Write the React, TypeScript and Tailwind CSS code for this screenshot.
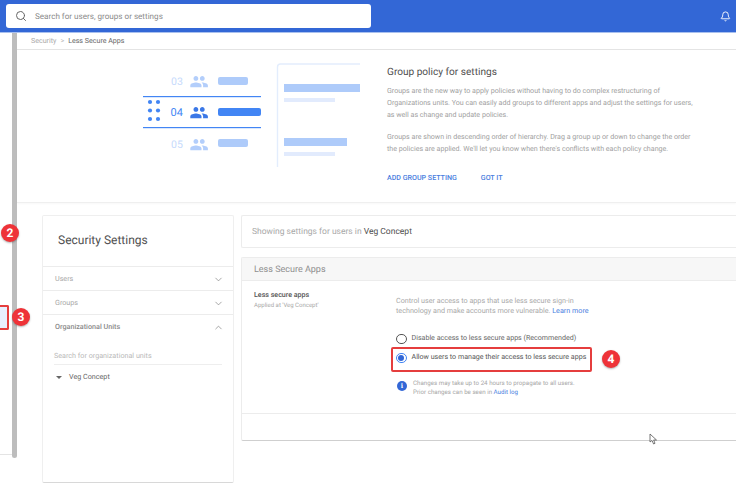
import React from "react";
import { Bell, ChevronDown, ChevronUp, Search } from "lucide-react";

const PEOPLE =
  "M16 11c1.66 0 2.99-1.34 2.99-3S17.66 5 16 5c-1.66 0-3 1.34-3 3s1.34 3 3 3zm-8 0c1.66 0 2.99-1.34 2.99-3S9.66 5 8 5C6.34 5 5 6.34 5 8s1.34 3 3 3zm0 2c-2.33 0-7 1.17-7 3.5V19h14v-2.5c0-2.33-4.67-3.5-7-3.5zm8 0c-.29 0-.62.02-.97.05 1.16.84 1.97 1.97 1.97 3.45V19h6v-2.5c0-2.33-4.67-3.5-7-3.5z";

function Illustration() {
  return (
    <svg width="217" height="105" viewBox="0 0 217 105" className="shrink-0">
      {/* rows, origin is 143,63 on the page */}
      <text x="28" y="22" fontSize="10.5" fill="#c6dafc" fontFamily="Roboto, sans-serif">03</text>
      <path d={PEOPLE} fill="#b3cefb" transform="translate(46.5,9) scale(0.8)" />
      <rect x="75" y="14" width="30" height="8" rx="2" fill="#aecbfa" />

      <rect x="0" y="33" width="118" height="1.2" fill="#4285f4" />
      <rect x="0" y="64" width="118" height="1.2" fill="#4285f4" />
      {[7, 15].map((x) =>
        [39, 47.5, 56].map((y) => <circle key={`${x}-${y}`} cx={x} cy={y} r="2.1" fill="#4285f4" />)
      )}
      <text x="27.5" y="53" fontSize="11" fill="#4285f4" fontFamily="Roboto, sans-serif">04</text>
      <path d={PEOPLE} fill="#3b78e7" transform="translate(46.5,40) scale(0.8)" />
      <rect x="75" y="45" width="43" height="8" rx="2" fill="#4285f4" />

      <text x="28" y="85" fontSize="10.5" fill="#c6dafc" fontFamily="Roboto, sans-serif">05</text>
      <path d={PEOPLE} fill="#b3cefb" transform="translate(46.5,72) scale(0.8)" />
      <rect x="75" y="76" width="30" height="8" rx="2" fill="#aecbfa" />

      {/* policy card */}
      <path d="M134.5 104V4a3 3 0 0 1 3-3H217" fill="none" stroke="#e3edfd" strokeWidth="1.4" />
      <rect x="141" y="21" width="76" height="8" fill="#aecbfa" />
      <rect x="141" y="35" width="51" height="4" fill="#e2ebfd" />
      <rect x="141" y="75" width="63" height="8" fill="#aecbfa" />
      <rect x="141" y="89" width="51" height="4" fill="#e2ebfd" />
    </svg>
  );
}

function Badge({ n, className }: { n: number; className: string }) {
  return (
    <div
      className={`absolute flex h-[18px] w-[18px] items-center justify-center rounded-full bg-[#ee3338] text-[12px] font-bold text-white shadow-[0_1px_2px_rgba(0,0,0,0.3)] ${className}`}
    >
      {n}
    </div>
  );
}

function SideRow({ label, open }: { label: string; open?: boolean }) {
  return (
    <div className={`flex h-[24px] items-center justify-between pl-[12px] pr-[9px] ${open ? "" : "border-b border-[#ececec] pt-[1px]"}`}>
      <span className={`text-[7.2px] ${open ? "font-medium text-[#8a8a8a]" : "text-[#a8a8a8]"}`}>{label}</span>
      {open ? (
        <ChevronUp size={11} strokeWidth={1.4} className="text-[#777]" />
      ) : (
        <ChevronDown size={11} strokeWidth={1.4} className="text-[#777]" />
      )}
    </div>
  );
}

function Radio({ on }: { on?: boolean }) {
  return (
    <span
      className={`mt-[0.5px] flex h-[10.5px] w-[10.5px] shrink-0 items-center justify-center rounded-full border ${on ? "border-[#4285f4]" : "border-[#555]"}`}
    >
      {on && <span className="h-[6px] w-[6px] rounded-full bg-[#3367d6]" />}
    </span>
  );
}

export default function App() {
  return (
    <div className="relative h-[491px] w-[736px] overflow-hidden bg-white font-['Roboto',sans-serif] [text-rendering:geometricPrecision]">
      {/* top bar */}
      <header className="flex h-[33px] items-start justify-between border-b border-[#a9c0ee] bg-[#3367d6] pl-[6px] pr-[5px] pt-[4px]">
        <div className="flex h-[24px] w-[365px] items-center rounded-[3px] bg-white pl-[9px]">
          <Search size={12} strokeWidth={2} className="text-[#666]" />
          <span className="ml-[8px] text-[8.1px] text-[#8a8a8a]">Search for users, groups or settings</span>
        </div>
        <Bell size={11} strokeWidth={2} className="mt-[7px] text-white" />
      </header>

      <div className="flex h-[458px]">
        {/* collapsed side nav, mostly hidden */}
        <div className="flex h-[422px] w-[12px] shrink-0 flex-col border-b border-[#e4e4e4]" />
        {/* scrollbar */}
        <div className="h-[425px] w-[5px] shrink-0 rounded-b-[3px] bg-[#bdbdbd]" />

        <main className="min-w-0 flex-1">
          <div className="flex h-[17px] items-center border-b border-[#e4e4e4] pl-[14px] text-[7.1px]">
            <span className="text-[#a8a8a8]">Security</span>
            <span className="mx-[4px] text-[#a8a8a8]">&gt;</span>
            <span className="text-[#666]">Less Secure Apps</span>
          </div>

          {/* group policy promo */}
          <section className="flex h-[153px] border-b border-[#efefef] pl-[126px] pt-[13px] shadow-[0_1px_2px_rgba(0,0,0,0.03)]">
            <Illustration />
            <div className="ml-[27px] w-[330px] shrink-0 pt-[2px]">
              <h2 className="text-[10.1px] leading-[15px] text-[#505050]">Group policy for settings</h2>
              <p className="mt-[5px] text-[7.1px] leading-[12.2px] text-[#a0a0a0]">
                Groups are the new way to apply policies without having to do complex restructuring of
                <br />
                Organizations units. You can easily add groups to different apps and adjust the settings for users,
                <br />
                as well as change and update policies.
              </p>
              <p className="mt-[9px] text-[7.1px] leading-[12.2px] text-[#a0a0a0]">
                Groups are shown in descending order of hierarchy. Drag a group up or down to change the order
                <br />
                the policies are applied. We'll let you know when there's conflicts with each policy change.
              </p>
              <div className="mt-[18px] flex gap-[24px] text-[7.1px] font-medium leading-[10px] text-[#4a7ee0]">
                <span>ADD GROUP SETTING</span>
                <span>GOT IT</span>
              </div>
            </div>
          </section>

          <div className="flex pl-[25px] pt-[12px]">
            {/* settings nav */}
            <aside className="h-[268px] w-[192px] shrink-0 rounded-[2px] border border-[#efefef] border-b-[#d8d8d8]">
              <h1 className="flex h-[51px] items-center border-b border-[#ececec] pb-[3px] pl-[15px] text-[12px] text-[#505050]">
                Security Settings
              </h1>
              <SideRow label="Users" />
              <SideRow label="Groups" />
              <SideRow label="Organizational Units" open />
              <div className="mx-[11px] mt-[12px] border-b border-[#eeeeee] pb-[3px] text-[7.2px] leading-[10px] text-[#b8b8b8]">
                Search for organizational units
              </div>
              <div className="ml-[13px] mt-[7px] flex items-center text-[7.2px] leading-[10px] text-[#666]">
                <span className="h-0 w-0 border-x-[3px] border-t-[3px] border-x-transparent border-t-[#666]" />
                <span className="ml-[7px]">Veg Concept</span>
              </div>
            </aside>

            <div className="ml-[7px] min-w-0 flex-1">
              <div className="flex h-[33px] items-center rounded-l-[2px] border border-r-0 border-[#ececec] pl-[10px] pt-[1px] text-[8.5px]">
                <span className="text-[#a8a8a8]">Showing settings for users in&nbsp;</span>
                <span className="text-[#505050]">Veg Concept</span>
              </div>

              {/* less secure apps card */}
              <section className="mt-[9px] h-[184px] rounded-l-[2px] border border-r-0 border-[#ececec] border-b-[#cfcfcf]">
                <div className="flex h-[23px] items-center border-b border-[#ececec] bg-[#f7f7f7] pl-[12px] pt-[3px] text-[9px] text-[#8f8f8f]">
                  Less Secure Apps
                </div>
                <div className="flex h-[133px] border-b border-[#ececec]">
                  <div className="w-[142px] shrink-0 pl-[12px] pt-[8px]">
                    <div className="text-[7.1px] font-medium leading-[11px] text-[#555]">Less secure apps</div>
                    <div className="mt-[1px] text-[6px] leading-[9px] text-[#a8a8a8]">Applied at 'Veg Concept'</div>
                  </div>
                  <div className="min-w-0 flex-1 pl-[12px] pt-[15px]">
                    <p className="text-[7.2px] leading-[10px] text-[#a8a8a8]">
                      Control user access to apps that use less secure sign-in
                      <br />
                      technology and make accounts more vulnerable. <span className="text-[#4a7ee0]">Learn more</span>
                    </p>
                    <div className="mt-[17px] flex items-start gap-[5px] text-[7.1px] leading-[10px] text-[#666]">
                      <Radio />
                      <span>Disable access to less secure apps (Recommended)</span>
                    </div>
                    {/* annotated option */}
                    <div className="-ml-[5px] mt-[3px] flex h-[25px] w-[201px] items-start gap-[5px] rounded-[2px] border-2 border-[#e53e3e] pl-[3px] pt-[3px] text-[7.1px] leading-[10px] text-[#555]">
                      <Radio on />
                      <span className="whitespace-nowrap">Allow users to manage their access to less secure apps</span>
                    </div>
                    <div className="mt-[7px] flex items-start text-[6.2px] leading-[8.5px] text-[#a8a8a8]">
                      <span className="ml-px mt-[2px] flex h-[10px] w-[10px] shrink-0 items-center justify-center rounded-full bg-[#3367d6] font-serif text-[7.5px] font-bold text-white">
                        i
                      </span>
                      <p className="ml-[6px]">
                        Changes may take up to 24 hours to propagate to all users.
                        <br />
                        Prior changes can be seen in <span className="text-[#4a7ee0]">Audit log</span>
                      </p>
                    </div>
                  </div>
                </div>
              </section>
            </div>
          </div>
        </main>
      </div>

      {/* annotations and the mouse pointer */}
      <Badge n={2} className="left-[1px] top-[224px]" />
      <Badge n={3} className="left-[12px] top-[308px]" />
      <Badge n={4} className="left-[602px] top-[350px]" />
      <div className="absolute left-0 top-[305px] h-[25px] w-[9px] rounded-r-[2px] border-2 border-l-0 border-[#e53e3e] bg-[#e8f0fe]" />
      <svg className="absolute left-[649px] top-[433px]" width="9" height="12" viewBox="0 0 9 12">
        <path d="M1 1v8l2-1.6L4.6 11l1.4-.7L4.6 7H7.5z" fill="#fff" stroke="#555" strokeWidth="0.8" />
      </svg>
    </div>
  );
}
